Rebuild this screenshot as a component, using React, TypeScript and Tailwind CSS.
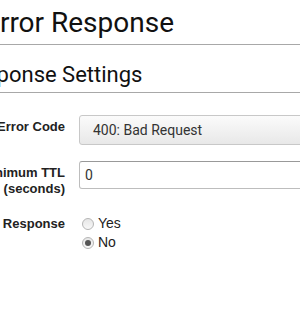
import React from "react";

function Radio({ checked }: { checked?: boolean }) {
  return (
    <span className="w-[12px] h-[12px] rounded-full border border-[#b5b5b5] bg-gradient-to-b from-[#e6e6e6] to-[#f8f8f8] flex items-center justify-center">
      {checked && <span className="w-[6px] h-[6px] rounded-full bg-[#555]" />}
    </span>
  );
}

export default function App() {
  return (
    <div className="w-[300px] h-[310px] overflow-hidden bg-white text-[#222]" style={{ fontFamily: "Roboto, 'Liberation Sans', sans-serif" }}>
      <div className="pt-[6px]">
        <h1 className="ml-[-16px] text-[28px] leading-[34px] text-[#111] font-normal whitespace-nowrap">Error Response</h1>
        <div className="mt-[4px] h-px bg-[#a8a8a8]" />
        <h2 className="ml-[-40px] mt-[17px] text-[22px] leading-[26px] text-[#111] font-normal whitespace-nowrap">Response Settings</h2>
        <div className="mt-[4px] h-px bg-[#a8a8a8]" />
      </div>
      <div className="mt-[22px] flex flex-col" style={{ fontFamily: "'Liberation Sans', Arial, sans-serif" }}>
        <div className="flex items-start">
          <div className="w-[65px] shrink-0 pt-[4px] text-right font-bold text-[13px] leading-[16px] whitespace-nowrap flex justify-end">Error Code</div>
          <div className="ml-[14px] w-[240px] shrink-0 h-[30px] rounded-[3px] border border-[#c8c8c8] bg-gradient-to-b from-[#fbfbfb] to-[#e8e8e8] flex items-center pl-[13px] text-[14px] text-[#333]" style={{ fontFamily: "Roboto, sans-serif" }}>
            400: Bad Request
          </div>
        </div>
        <div className="flex items-start mt-[16px]">
          <div className="w-[65px] shrink-0 pt-[4px] text-right font-bold text-[13px] leading-[16px] whitespace-nowrap flex flex-col items-end">
            <span>Minimum TTL</span>
            <span>(seconds)</span>
          </div>
          <div className="ml-[14px] w-[240px] shrink-0 h-[28px] rounded-[3px] border border-[#bdbdbd] border-t-[#999] bg-white flex items-center pl-[5px] text-[14px] text-[#333]" style={{ fontFamily: "Roboto, sans-serif" }}>
            0
          </div>
        </div>
        <div className="flex items-start mt-[17px]">
          <div className="w-[65px] shrink-0 pt-[2px] text-right font-bold text-[13px] leading-[16px] whitespace-nowrap flex justify-end">Custom Response</div>
          <div className="ml-[17px] flex flex-col text-[14px] leading-[19px]">
            <label className="flex items-center gap-[4px]"><Radio /><span>Yes</span></label>
            <label className="flex items-center gap-[4px]"><Radio checked /><span>No</span></label>
          </div>
        </div>
      </div>
    </div>
  );
}
